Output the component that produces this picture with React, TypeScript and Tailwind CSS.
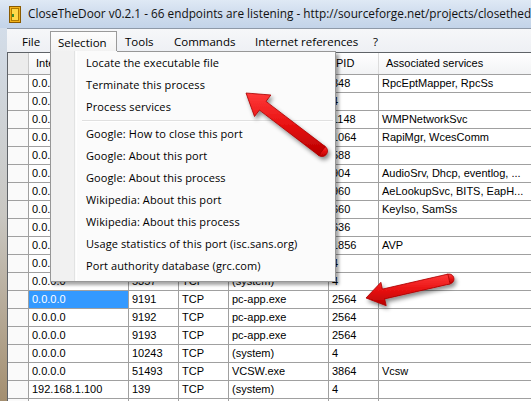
import React from "react";

type Row = [string, string, string, string, string, string];

const rows: Row[] = [
  ["0.0.0.0", "135", "TCP", "svchost.exe", "848", "RpcEptMapper, RpcSs"],
  ["0.0.0.0", "443", "TCP", "(system)", "4", ""],
  ["0.0.0.0", "554", "TCP", "wmpnetwk.exe", "1148", "WMPNetworkSvc"],
  ["0.0.0.0", "990", "TCP", "wcescomm.exe", "1064", "RapiMgr, WcesComm"],
  ["0.0.0.0", "1025", "TCP", "wininit.exe", "588", ""],
  ["0.0.0.0", "1026", "TCP", "svchost.exe", "904", "AudioSrv, Dhcp, eventlog, ..."],
  ["0.0.0.0", "1027", "TCP", "svchost.exe", "960", "AeLookupSvc, BITS, EapH..."],
  ["0.0.0.0", "1028", "TCP", "lsass.exe", "660", "KeyIso, SamSs"],
  ["0.0.0.0", "1029", "TCP", "services.exe", "636", ""],
  ["0.0.0.0", "1110", "TCP", "avp.exe", "1856", "AVP"],
  ["0.0.0.0", "2869", "TCP", "(system)", "4", ""],
  ["0.0.0.0", "5357", "TCP", "(system)", "4", ""],
  ["0.0.0.0", "9191", "TCP", "pc-app.exe", "2564", ""],
  ["0.0.0.0", "9192", "TCP", "pc-app.exe", "2564", ""],
  ["0.0.0.0", "9193", "TCP", "pc-app.exe", "2564", ""],
  ["0.0.0.0", "10243", "TCP", "(system)", "4", ""],
  ["0.0.0.0", "51493", "TCP", "VCSW.exe", "3864", "Vcsw"],
  ["192.168.1.100", "139", "TCP", "(system)", "4", ""],
  ["", "", "", "", "", ""],
];

const widths = ["w-[100px]", "w-[50px]", "w-[50px]", "w-[100px]", "w-[50px]", "w-[220px]"];
const headers = ["Interface", "Port", "Protocol", "Process", "PID", "Associated services"];

const menuItems: (string | null)[] = [
  "Locate the executable file",
  "Terminate this process",
  "Process services",
  null,
  "Google: How to close this port",
  "Google: About this port",
  "Google: About this process",
  "Wikipedia: About this port",
  "Wikipedia: About this process",
  "Usage statistics of this port (isc.sans.org)",
  "Port authority database (grc.com)",
];

function Arrow({
  tail,
  tip,
  shaft,
  headLen,
  headW,
}: {
  tail: [number, number];
  tip: [number, number];
  shaft: number;
  headLen: number;
  headW: number;
}) {
  const dx = tip[0] - tail[0];
  const dy = tip[1] - tail[1];
  const len = Math.hypot(dx, dy);
  const ux = dx / len;
  const uy = dy / len;
  const px = -uy;
  const py = ux;
  const bx = tip[0] - headLen * ux;
  const by = tip[1] - headLen * uy;
  const s = shaft / 2;
  const h = headW / 2;
  const pts = [
    [tail[0] + s * px, tail[1] + s * py],
    [bx + s * px, by + s * py],
    [bx + h * px, by + h * py],
    [tip[0], tip[1]],
    [bx - h * px, by - h * py],
    [bx - s * px, by - s * py],
    [tail[0] - s * px, tail[1] - s * py],
  ]
    .map((p) => `${p[0].toFixed(1)},${p[1].toFixed(1)}`)
    .join(" ");
  return (
    <g filter="url(#ashadow)">
      <circle cx={tail[0]} cy={tail[1]} r={s} fill="url(#ared)" stroke="#a80000" strokeWidth="0.8" />
      <polygon points={pts} fill="url(#ared)" stroke="#a80000" strokeWidth="0.8" strokeLinejoin="round" />
    </g>
  );
}

const segoe = { fontFamily: "'Open Sans', 'Noto Sans', sans-serif" };

export default function App() {
  return (
    <div
      className="relative w-[531px] h-[401px] overflow-hidden bg-white text-black"
      style={{ fontFamily: "'Liberation Sans', Arial, sans-serif" }}
    >
      {/* Title bar */}
      <div className="h-[28px] flex items-center overflow-hidden bg-gradient-to-b from-[#dfe9f5] via-[#cfdced] to-[#c3d4e9]">
        <div className="w-[28px] shrink-0 flex justify-center pl-[2px]">
          <svg width="12" height="17" viewBox="0 0 12 17">
            <rect x="0.5" y="0.5" width="11" height="16" fill="#f2b21b" stroke="#8a5a00" />
            <rect x="2.5" y="2.5" width="7" height="12" fill="#ffd94a" stroke="#b07a00" />
            <rect x="3" y="8" width="2" height="3" fill="#3a8a2a" />
          </svg>
        </div>
        <span className="text-[11.8px] whitespace-nowrap text-[#111]" style={segoe}>
          CloseTheDoor v0.2.1 - 66 endpoints are listening - http://sourceforge.net/projects/closethedoor
        </span>
      </div>

      <div className="flex h-[373px]">
        {/* left frame */}
        <div className="w-[7px] shrink-0 bg-gradient-to-b from-[#d3dde9] via-[#c9c7c2] to-[#a48f70]" />

        <div className="flex-1 min-w-0 flex flex-col">
          {/* Menu bar */}
          <div
            className="h-[24px] shrink-0 flex border-t border-[#8e99a8] bg-gradient-to-b from-[#f6f7f9] to-[#eef0f4] text-[11.5px]"
            style={segoe}
          >
            <div className="w-[7px] shrink-0" />
            <div className="w-[36px] shrink-0 pl-[8px] pt-[4px]">File</div>
            <div className="w-[67px] shrink-0 h-[21px] mt-[2px] pl-[7px] pt-[2px] border border-b-0 border-[#9a9a9a] bg-gradient-to-b from-[#fdfdfd] to-[#f3f3f3]">
              Selection
            </div>
            <div className="w-[49px] shrink-0 pl-[8px] pt-[4px]">Tools</div>
            <div className="w-[81px] shrink-0 pl-[8px] pt-[4px]">Commands</div>
            <div className="w-[118px] shrink-0 pl-[8px] pt-[4px] whitespace-nowrap">Internet references</div>
            <div className="w-[30px] shrink-0 pl-[8px] pt-[4px]">?</div>
          </div>

          {/* List view */}
          <div className="flex-1 border-t border-l border-[#5f6368] text-[11px] overflow-hidden">
            {/* header */}
            <div className="flex h-[22px] border-b border-[#a0a0a0] bg-gradient-to-b from-[#ffffff] to-[#f2f3f5] whitespace-nowrap">
              <div className="w-[21px] shrink-0 border-r border-[#c8c8c8] bg-[#ececec]" />
              {headers.map((h, i) => (
                <div
                  key={i}
                  className={`${widths[i]} shrink-0 pl-[7px] flex items-center border-r border-[#dcdcdc] overflow-hidden`}
                >
                  {h}
                </div>
              ))}
            </div>
            {rows.map((r, ri) => (
              <div key={ri} className="flex h-[18px] whitespace-nowrap">
                <div className="w-[21px] shrink-0 border-r border-b border-[#a0a0a0] bg-[#fafafa]" />
                {r.map((c, ci) => {
                  const sel = ri === 12 && ci === 0;
                  return (
                    <div
                      key={ci}
                      className={`${widths[ci]} shrink-0 pl-[3px] flex items-center border-r border-b border-[#a0a0a0] overflow-hidden ${
                        sel ? "bg-[#3399ff] text-white" : "bg-white"
                      }`}
                    >
                      {c}
                    </div>
                  );
                })}
              </div>
            ))}
          </div>
        </div>
      </div>

      {/* Dropdown menu */}
      <div
        className="absolute left-[50px] top-[51px] w-[286px] h-[231px] border-l border-r border-b border-[#979797] bg-[#fbfbfb] shadow-[3px_3px_3px_rgba(0,0,0,0.35)] pt-[1px] text-[11px] tracking-[0.1px]"
        style={segoe}
      >
        <div className="absolute top-0 left-[66px] right-0 h-px bg-[#979797]" />
        <div className="absolute top-0 bottom-0 left-0 w-[24px] bg-[#f1f1f1] border-r border-[#e2e3e3]" />
        <div className="absolute top-0 bottom-0 left-[25px] w-px bg-white" />
        <div className="relative flex flex-col">
          {menuItems.map((m, i) =>
            m === null ? (
              <div key={i} className="h-[5px] pl-[31px] pr-[2px] flex flex-col justify-center">
                <div className="h-px bg-[#e0e0e0]" />
                <div className="h-px bg-white" />
              </div>
            ) : (
              <div key={i} className="h-[22px] pl-[35px] flex items-center whitespace-nowrap">
                {m}
              </div>
            )
          )}
        </div>
      </div>

      {/* Annotation arrows */}
      <svg className="absolute inset-0 pointer-events-none" width="531" height="401">
        <defs>
          <linearGradient id="ared" x1="0" y1="0" x2="0" y2="1">
            <stop offset="0" stopColor="#ff3a3a" />
            <stop offset="0.5" stopColor="#e81212" />
            <stop offset="1" stopColor="#b80000" />
          </linearGradient>
          <filter id="ashadow" x="-30%" y="-30%" width="160%" height="160%">
            <feDropShadow dx="2" dy="3" stdDeviation="2" floodColor="#000" floodOpacity="0.45" />
          </filter>
        </defs>
        <Arrow tail={[322, 151]} tip={[246, 93]} shaft={11} headLen={21} headW={27} />
        <Arrow tail={[449, 279]} tip={[366, 298]} shaft={10} headLen={18} headW={24} />
      </svg>
    </div>
  );
}
